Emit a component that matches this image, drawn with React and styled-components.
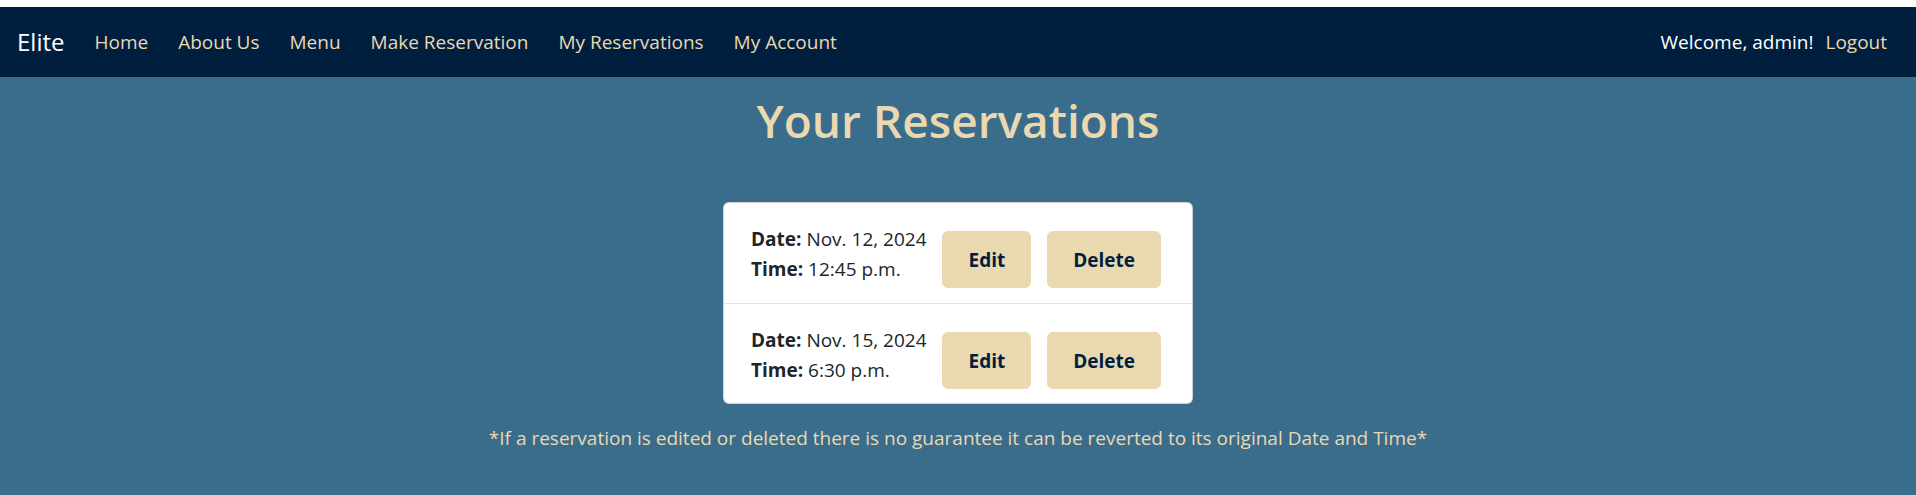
import React from 'react';
import styled, { createGlobalStyle } from 'styled-components';

const GlobalStyle = createGlobalStyle`
  html, body { margin: 0; padding: 0; background: #ffffff; }
  body {
    padding-top: 7px;
    font-family: "Open Sans", "Noto Sans", sans-serif;
    font-size: 19px;
    line-height: 1.5;
    color: #212529;
  }
  * { box-sizing: border-box; }
`;

const Page = styled.div`
  min-height: calc(100vh - 7px);
  background: #3a6d8c;
  display: flex;
  flex-direction: column;
`;

const Navbar = styled.nav`
  height: 70px;
  background: #001f3f;
  display: flex;
  align-items: center;
  justify-content: space-between;
  padding: 0 29px 0 17px;
`;

const NavGroup = styled.div`
  display: flex;
  align-items: center;
  gap: ${(p) => p.$gap}px;
`;

const Brand = styled.a`
  color: #ffffff;
  font-size: 24px;
  line-height: 30px;
  text-decoration: none;
`;

const NavLink = styled.a`
  color: ${(p) => (p.$light ? '#ffffff' : '#ead8b1')};
  font-size: 19px;
  line-height: 30px;
  text-decoration: none;
`;

const Main = styled.main`
  display: flex;
  flex-direction: column;
  align-items: center;
`;

const Title = styled.h1`
  margin: 13px 0 0;
  font-size: 46px;
  line-height: 60px;
  font-weight: 600;
  color: #ead8b1;
`;

const Card = styled.ul`
  list-style: none;
  margin: 52px 0 0;
  padding: 0;
  width: 470px;
  background: #ffffff;
  border: 1px solid rgba(0, 0, 0, 0.175);
  border-radius: 6px;
  overflow: hidden;
`;

const Row = styled.li`
  display: flex;
  align-items: flex-start;
  height: 100px;
  padding: 0 31px 0 27px;
  & + & { border-top: 1px solid #dee2e6; }
`;

const Info = styled.div`
  margin-top: 21px;
  flex: 1;
  font-size: 19px;
  line-height: 30px;
  color: #212529;
  white-space: nowrap;
`;

const Label = styled.strong`
  font-weight: 700;
`;

const Actions = styled.div`
  margin-top: 28px;
  display: flex;
  gap: 16px;
`;

const Button = styled.button`
  font-family: inherit;
  font-size: 19px;
  line-height: 30px;
  font-weight: 700;
  color: #001f3f;
  background: #ead8b1;
  border: 1px solid #ead8b1;
  border-radius: 6px;
  padding: 12.5px 25px;
  cursor: pointer;
`;

const Note = styled.p`
  margin: 19px 0 40px;
  font-size: 19px;
  line-height: 30px;
  color: #ead8b1;
`;

const reservations = [
  { date: 'Nov. 12, 2024', time: '12:45 p.m.' },
  { date: 'Nov. 15, 2024', time: '6:30 p.m.' },
];

export default function App() {
  return (
    <>
      <GlobalStyle />
      <Page>
        <Navbar>
          <NavGroup $gap={30}>
            <Brand href="#">Elite</Brand>
            <NavLink href="#">Home</NavLink>
            <NavLink href="#">About Us</NavLink>
            <NavLink href="#">Menu</NavLink>
            <NavLink href="#">Make Reservation</NavLink>
            <NavLink href="#">My Reservations</NavLink>
            <NavLink href="#">My Account</NavLink>
          </NavGroup>
          <NavGroup $gap={12}>
            <NavLink as="span" $light>Welcome, admin!</NavLink>
            <NavLink href="#">Logout</NavLink>
          </NavGroup>
        </Navbar>
        <Main>
          <Title>Your Reservations</Title>
          <Card>
            {reservations.map((r) => (
              <Row key={r.date}>
                <Info>
                  <div><Label>Date:</Label> {r.date}</div>
                  <div><Label>Time:</Label> {r.time}</div>
                </Info>
                <Actions>
                  <Button>Edit</Button>
                  <Button>Delete</Button>
                </Actions>
              </Row>
            ))}
          </Card>
          <Note>*If a reservation is edited or deleted there is no guarantee it can be reverted to its original Date and Time*</Note>
        </Main>
      </Page>
    </>
  );
}
